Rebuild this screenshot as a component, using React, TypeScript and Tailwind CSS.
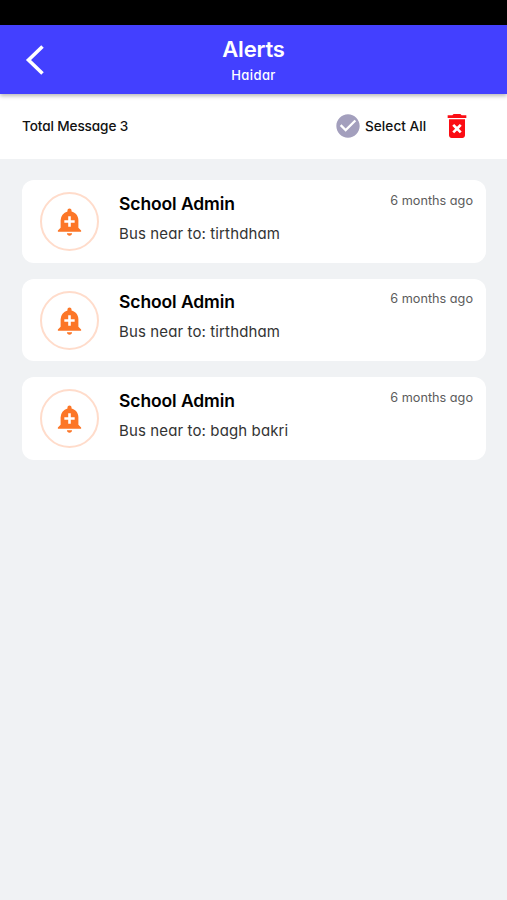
import { MdAddAlert, MdCheckCircle, MdDeleteForever } from "react-icons/md";

const messages = [
  { sender: "School Admin", text: "Bus near to: tirthdham", time: "6 months ago" },
  { sender: "School Admin", text: "Bus near to: tirthdham", time: "6 months ago" },
  { sender: "School Admin", text: "Bus near to: bagh bakri", time: "6 months ago" },
];

function Header() {
  return (
    <header className="relative z-10 flex h-[69px] items-center bg-[#4340ff] text-white shadow-[0_2px_4px_rgba(0,0,0,0.28)]">
      <div className="flex w-[100px] pl-[24px]">
        <svg className="h-[32px] w-[20px]" viewBox="0 0 20 32" fill="none" stroke="currentColor" strokeWidth="3.6">
          <path d="M18.5 2.5 L4.5 16 L18.5 29.5" />
        </svg>
      </div>
      <div className="flex flex-1 flex-col items-center pt-[3px]">
        <h1 className="text-[22px] leading-[27px] font-semibold tracking-[-0.2px]">Alerts</h1>
        <p className="pt-[1px] text-[13px] leading-[22px] font-medium tracking-[0.4px]">Haidar</p>
      </div>
      <div className="w-[100px]" />
    </header>
  );
}

function Toolbar() {
  return (
    <div className="flex h-[65px] items-center bg-white pr-[34px] pb-[1px] pl-[22px] text-[13.6px] font-medium text-[#111]">
      <span className="flex-1 tracking-[-0.12px]">Total Message 3</span>
      <MdCheckCircle className="mr-[3px] size-[28px] text-[#a39fbd]" />
      <span className="w-[62px] whitespace-nowrap tracking-[0.05px]">Select All</span>
      <MdDeleteForever className="ml-[14px] size-[32px] text-[#fb0d14]" />
    </div>
  );
}

function MessageCard({ sender, text, time }: { sender: string; text: string; time: string }) {
  return (
    <article className="flex h-[82.7px] rounded-[12px] bg-white pt-[12px] pr-[13px] pl-[18px]">
      <div className="flex size-[59px] shrink-0 items-center justify-center rounded-full border-2 border-[#ffdccb]">
        <MdAddAlert className="size-[31px] text-[#fc7627]" />
      </div>
      <div className="ml-[20px] flex-1 pt-[0.6px]">
        <h2 className="text-[17.5px] leading-[22px] font-semibold tracking-[-0.1px] text-black">{sender}</h2>
        <p className="mt-[8px] text-[15px] leading-[22px] tracking-[0.12px] text-[#333]">{text}</p>
      </div>
      <time className="pt-[0.8px] text-[12.7px] leading-[16px] text-[#5c5c5c]">{time}</time>
    </article>
  );
}

export default function App() {
  return (
    <div className="min-h-[900px] w-full bg-[#f0f2f4] font-['Inter',sans-serif] [font-feature-settings:'cv11']">
      <div className="h-[25px] bg-black" />
      <Header />
      <Toolbar />
      <main className="flex flex-col gap-[16px] pt-[21px] pr-[21px] pl-[22px]">
        {messages.map((m, i) => (
          <MessageCard key={i} {...m} />
        ))}
      </main>
    </div>
  );
}
